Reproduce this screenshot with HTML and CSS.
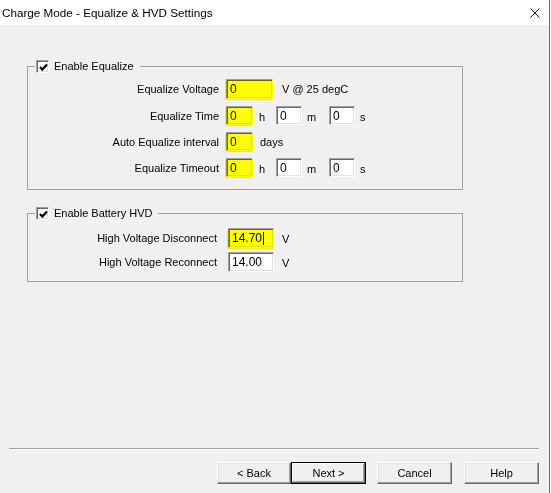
FILE: index.html
```html
<!DOCTYPE html>
<html>
<head>
<meta charset="utf-8">
<link rel="stylesheet" href="styles.css">
</head>
<body>
<div class="window">
  <div class="titlebar">
    <span class="title">Charge Mode - Equalize &amp; HVD Settings</span>
    <svg class="close" width="10" height="10" viewBox="0 0 10 10"><path d="M0.5 0.5 L9.5 9.5 M9.5 0.5 L0.5 9.5" stroke="#222" stroke-width="1" fill="none"/></svg>
  </div>
  <div class="content">
    <fieldset class="group g1">
      <legend><span class="check"><svg width="9" height="9" viewBox="0 0 9 9"><path d="M1 4 L3.3 6.6 L8 1.4" stroke="#000" stroke-width="2.2" fill="none"/></svg></span><span>Enable Equalize</span></legend>
      <div class="form f1">
        <label>Equalize Voltage</label>
        <div class="ctrl"><span class="hl"><input class="tb w47" value="0" readonly></span><span class="unit uv">V @ 25 degC</span></div>
        <label>Equalize Time</label>
        <div class="ctrl"><span class="hl"><input class="tb w27" value="0" readonly></span><span class="unit uh">h</span><input class="tb w26" value="0" readonly><span class="unit um">m</span><input class="tb w26" value="0" readonly><span class="unit us">s</span></div>
        <label>Auto Equalize interval</label>
        <div class="ctrl"><span class="hl"><input class="tb w27" value="0" readonly></span><span class="unit ud">days</span></div>
        <label>Equalize Timeout</label>
        <div class="ctrl"><span class="hl"><input class="tb w27" value="0" readonly></span><span class="unit uh">h</span><input class="tb w26" value="0" readonly><span class="unit um">m</span><input class="tb w26" value="0" readonly><span class="unit us">s</span></div>
      </div>
    </fieldset>
    <fieldset class="group g2">
      <legend><span class="check"><svg width="9" height="9" viewBox="0 0 9 9"><path d="M1 4 L3.3 6.6 L8 1.4" stroke="#000" stroke-width="2.2" fill="none"/></svg></span><span>Enable Battery HVD</span></legend>
      <div class="form f2">
        <label>High Voltage Disconnect</label>
        <div class="ctrl"><span class="hl"><input class="tb w46" value="14.70" readonly><span class="caret"></span></span><span class="unit uv2">V</span></div>
        <label>High Voltage Reconnect</label>
        <div class="ctrl"><input class="tb w46" value="14.00" readonly><span class="unit uv2">V</span></div>
      </div>
    </fieldset>
  </div>
  <div class="footer">
    <div class="sep"></div>
    <div class="buttons">
      <button class="btn back">&lt; Back</button>
      <button class="btn next">Next &gt;</button>
      <button class="btn cancel">Cancel</button>
      <button class="btn help">Help</button>
    </div>
  </div>
</div>
</body>
</html>
```
FILE: styles.css
```css
html, body {
  margin: 0;
  padding: 0;
  background: #fff;
}
body {
  width: 551px;
  height: 493px;
  overflow: hidden;
  font-family: "Liberation Sans", Arial, sans-serif;
  font-size: 11px;
  color: #000;
}
.window {
  box-sizing: border-box;
  width: 550px;
  height: 493px;
  border-right: 1px solid #1c7ad6;
  background: #f0f0f0;
  display: flex;
  flex-direction: column;
}
.titlebar {
  height: 25px;
  flex: none;
  background: #fff;
  display: flex;
  align-items: center;
  justify-content: space-between;
  padding: 0 9px 0 2px;
}
.title {
  font-size: 11.7px;
  line-height: 14px;
  margin-top: 1px;
}
.close {
  display: block;
  margin-top: 1px;
}
.content {
  flex: 1;
  padding: 35px 0 0 27px;
}
.group {
  box-sizing: border-box;
  width: 436px;
  margin: 0;
  padding: 0;
  border: 1px solid #a0a0a0;
  min-width: 0;
}
.group legend {
  display: flex;
  align-items: center;
  gap: 5px;
  height: 13px;
  line-height: 13px;
  margin-left: 7px;
  padding: 0 6px 0 1px;
}
.check {
  box-sizing: border-box;
  width: 13px;
  height: 13px;
  border: 1px solid;
  border-color: #a0a0a0 #fff #fff #a0a0a0;
  box-shadow: inset 1px 1px 0 #696969, inset -1px -1px 0 #e3e3e3;
  background: #fff;
  display: flex;
  align-items: center;
  justify-content: center;
  padding: 1px 0 0 1px;
}
.check svg { display: block; }
.g1 { margin-bottom: 17px; }
.form {
  display: grid;
  align-items: center;
}
.f1 {
  grid-template-columns: 191px auto;
  column-gap: 7px;
  grid-template-rows: 20px 19px 19px 19px;
  row-gap: 7px;
  padding: 6px 0 12px 0;
}
.f2 {
  grid-template-columns: 189px auto;
  column-gap: 11px;
  grid-template-rows: 20px 20px;
  row-gap: 4px;
  padding: 8px 0 9px 0;
}
.form label {
  text-align: right;
  white-space: nowrap;
}
.ctrl {
  display: flex;
  align-items: center;
  height: 100%;
}
.hl {
  position: relative;
  display: flex;
  height: 100%;
}
.hl::after {
  content: "";
  position: absolute;
  top: 1px;
  left: -1px;
  right: 0;
  bottom: -1px;
  background: #ffff00;
  mix-blend-mode: multiply;
  border-radius: 2px;
  pointer-events: none;
}
.caret {
  position: absolute;
  left: 35px;
  top: 4px;
  width: 1px;
  height: 13px;
  background: #000;
}
.tb {
  box-sizing: border-box;
  height: 100%;
  margin: 0;
  padding: 0 0 0 3px;
  border: 1px solid;
  border-color: #a0a0a0 #fff #fff #a0a0a0;
  box-shadow: inset 1px 1px 0 #696969, inset -1px -1px 0 #e3e3e3;
  background: #fff;
  font-family: "Liberation Sans", Arial, sans-serif;
  font-size: 12px;
  color: #000;
  outline: none;
  border-radius: 0;
}
.w47 { width: 47px; }
.w46 { width: 46px; }
.w27 { width: 27px; }
.w26 { width: 26px; }
.unit { white-space: nowrap; }
.uv { padding-left: 9px; }
.uh { width: 23px; box-sizing: border-box; padding-left: 6px; padding-top: 2px; }
.um { width: 27px; box-sizing: border-box; padding-left: 5px; padding-top: 2px; }
.us { padding-left: 5px; padding-top: 2px; }
.ud { padding-left: 7px; }
.uv2 { padding-left: 8px; padding-top: 2px; }
.footer {
  flex: none;
}
.sep {
  margin: 0 10px 0 9px;
  height: 0;
  border-top: 1px solid #a0a0a0;
  border-bottom: 1px solid #fff;
}
.buttons {
  display: flex;
  justify-content: flex-end;
  padding: 12px 10px 9px 0;
}
.btn {
  box-sizing: border-box;
  width: 75px;
  height: 22px;
  margin: 0;
  padding: 0;
  border: 1px solid;
  border-color: #fff #696969 #696969 #fff;
  box-shadow: inset -1px -1px 0 #a0a0a0, inset 1px 1px 0 #e3e3e3;
  background: #f0f0f0;
  font-family: "Liberation Sans", Arial, sans-serif;
  font-size: 11px;
  color: #000;
  border-radius: 0;
}
.back { width: 74px; }
.next {
  border: 1px solid #000;
  box-shadow: inset -1px -1px 0 #696969, inset 1px 1px 0 #fff, inset -2px -2px 0 #a0a0a0;
}
.cancel { margin-left: 11px; }
.help { margin-left: 12px; }
```
